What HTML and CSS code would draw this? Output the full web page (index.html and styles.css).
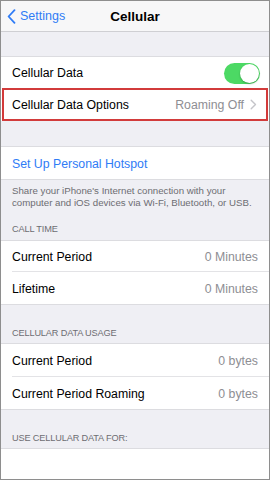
FILE: index.html
```html
<!DOCTYPE html>
<html>
<head>
<meta charset="utf-8">
<link rel="stylesheet" href="styles.css">
</head>
<body>
<div class="screen">
  <div class="nav">
    <div class="back">
      <svg class="chev" width="9" height="15" viewBox="0 0 9 15"><path d="M7.5 1.2 L1.6 7.5 L7.5 13.8" fill="none" stroke="#2f7cf6" stroke-width="1.8" stroke-linecap="round" stroke-linejoin="round"/></svg>
      <span>Settings</span>
    </div>
    <div class="title">Cellular</div>
  </div>
  <div class="gap g1"></div>
  <div class="group">
    <div class="row r1">
      <span class="label">Cellular Data</span>
      <span class="toggle"><span class="knob"></span></span>
    </div>
    <div class="row r2 highlight">
      <span class="label">Cellular Data Options</span>
      <span class="value">Roaming Off <svg class="disc" width="7" height="11" viewBox="0 0 7 11"><path d="M1.2 1.2 L5.5 5.5 L1.2 9.8" fill="none" stroke="#c4c4c9" stroke-width="1.4" stroke-linecap="round" stroke-linejoin="round"/></svg></span>
    </div>
  </div>
  <div class="gap g2"></div>
  <div class="group">
    <div class="row r3"><span class="link">Set Up Personal Hotspot</span></div>
  </div>
  <div class="footer">Share your iPhone's Internet connection with your computer and iOS devices via Wi-Fi, Bluetooth, or USB.</div>
  <div class="header h1">CALL TIME</div>
  <div class="group">
    <div class="row r4 sep"><span class="label">Current Period</span><span class="value">0 Minutes</span></div>
    <div class="row r5"><span class="label">Lifetime</span><span class="value">0 Minutes</span></div>
  </div>
  <div class="header h2">CELLULAR DATA USAGE</div>
  <div class="group">
    <div class="row r6 sep"><span class="label">Current Period</span><span class="value">0 bytes</span></div>
    <div class="row r5"><span class="label">Current Period Roaming</span><span class="value">0 bytes</span></div>
  </div>
  <div class="header h3">USE CELLULAR DATA FOR:</div>
  <div class="group last"></div>
</div>
</body>
</html>
```

FILE: styles.css
```css
* { box-sizing: border-box; }
html, body { margin: 0; padding: 0; }
body { font-family: "Liberation Sans", Arial, sans-serif; }
.screen {
  width: 270px;
  height: 480px;
  border: 1px solid #8e8e8e;
  background: #efeff4;
  display: flex;
  flex-direction: column;
  overflow: hidden;
}
.nav {
  height: 31px;
  background: #f7f7f8;
  border-bottom: 1px solid #cfcfd3;
  display: flex;
  align-items: center;
  position: relative;
  flex-shrink: 0;
}
.back {
  display: flex;
  align-items: center;
  gap: 4px;
  padding-left: 6px;
  color: #2f7cf6;
  font-size: 12.5px;
}
.title {
  position: absolute;
  left: 0;
  right: 0;
  text-align: center;
  font-size: 13.5px;
  font-weight: bold;
  color: #000;
  pointer-events: none;
}
.gap { flex-shrink: 0; }
.g1 { height: 25px; border-bottom: 1px solid #dcdce0; }
.g2 { height: 26px; border-bottom: 1px solid #dcdce0; }
.group { background: #fff; flex-shrink: 0; }
.row {
  display: flex;
  align-items: center;
  justify-content: space-between;
  padding: 0 11px;
  font-size: 12.3px;
  color: #000;
  position: relative;
}
.r1 { height: 31px; padding-top: 1px; }
.r2 { height: 33px; }
.r3 { height: 32px; padding-top: 2px; }
.r4 { height: 31px; padding-top: 1px; }
.r5 { height: 32px; padding-top: 1px; }
.r6 { height: 33px; padding-top: 1px; }
.sep::after {
  content: "";
  position: absolute;
  left: 11px;
  right: 0;
  bottom: 0;
  height: 1px;
  background: #e3e3e6;
}
.highlight {
  border: 2px solid #d23b3b;
  margin: 0 1px;
  padding: 0 9px 0 8px;
}
.value {
  color: #8e8e93;
  display: flex;
  align-items: center;
  gap: 6px;
}
.link { color: #2f7cf6; }
.toggle {
  width: 36px;
  height: 21px;
  border-radius: 11px;
  background: #4cd964;
  position: relative;
  margin-right: -2px;
}
.knob {
  position: absolute;
  right: 1px;
  top: 1px;
  width: 19px;
  height: 19px;
  border-radius: 50%;
  background: #fff;
  box-shadow: 0 1px 2px rgba(0,0,0,0.25);
}
.footer {
  padding: 5px 11px 0 11px;
  font-size: 9.7px;
  line-height: 12px;
  color: #6d6d72;
  border-top: 1px solid #dcdce0;
  flex-shrink: 0;
}
.header {
  font-size: 9.2px;
  letter-spacing: -0.15px;
  color: #6d6d72;
  padding: 0 11px 5px 11px;
  display: flex;
  align-items: flex-end;
  flex-shrink: 0;
  border-bottom: 1px solid #dcdce0;
}
.h1 { height: 32px; padding-bottom: 6px; }
.h2 { height: 40px; border-top: 1px solid #dcdce0; }
.h3 { height: 40px; border-top: 1px solid #dcdce0; }
.last { flex: 1; }
```
